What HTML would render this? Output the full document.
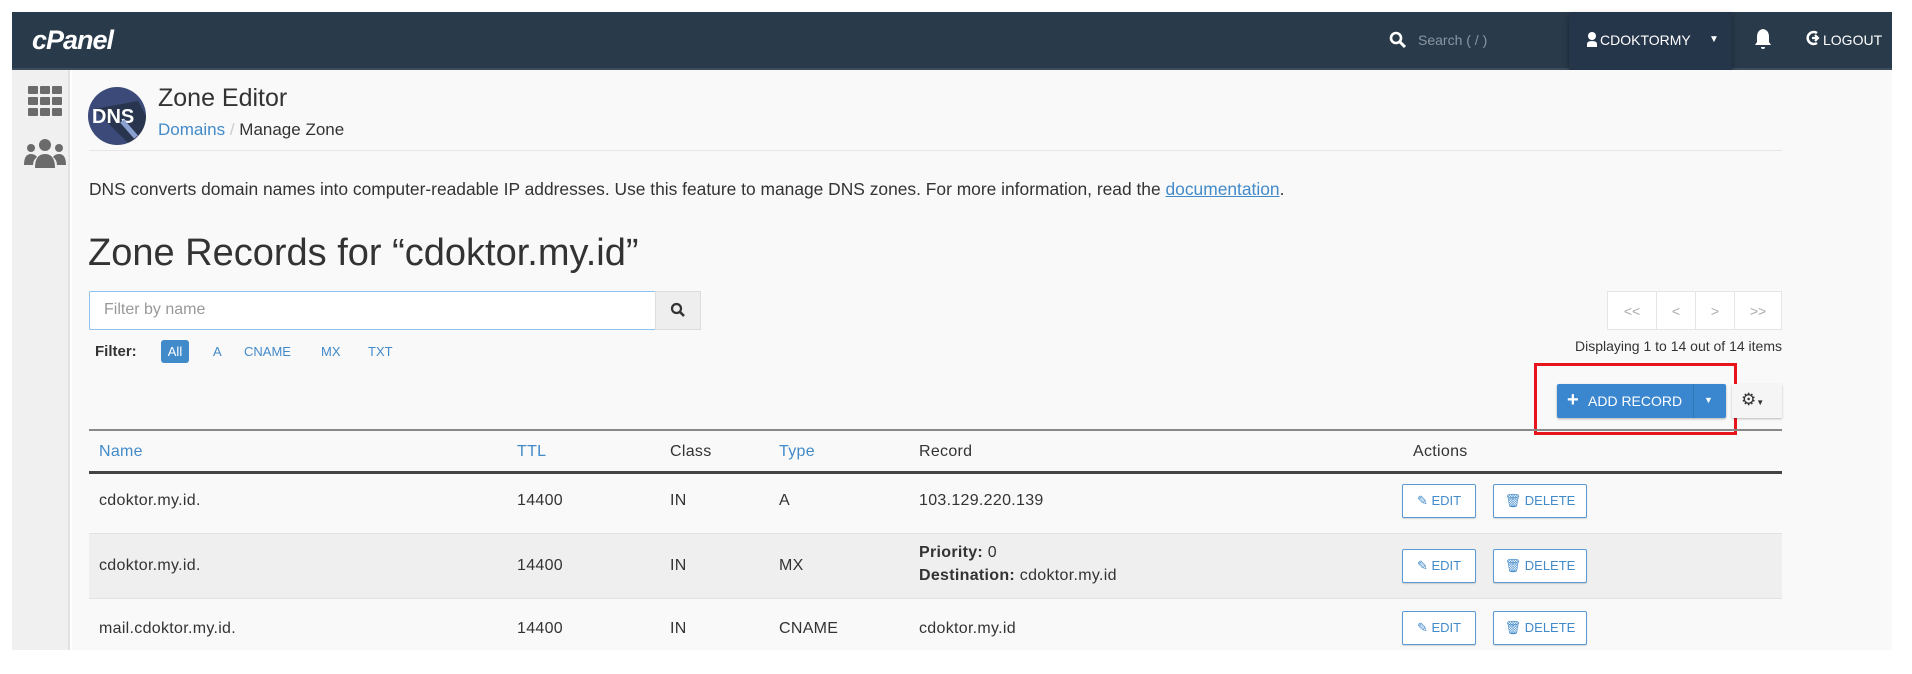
<!DOCTYPE html>
<html><head><meta charset="utf-8"><style>
*{box-sizing:border-box;margin:0;padding:0}
body{width:1912px;height:674px;background:#fff;font-family:"Liberation Sans",sans-serif;position:relative;overflow:hidden;color:#333}
.abs{position:absolute}
#nav{left:12px;top:12px;width:1880px;height:58px;background:#293a4a;border-bottom:2px solid #3d4d5c}
#side{left:12px;top:70px;width:58px;height:580px;background:#f0f0f0;border-right:2px solid #e2e2e2}
#main{left:72px;top:70px;width:1820px;height:580px;background:#f9f9f9}
.t{position:absolute;white-space:nowrap}
.r{font-size:16px;letter-spacing:.3px}
.blue{color:#428bca}
.btn{position:absolute;border:1px solid #5b9bd5;border-radius:2px;background:#fff;color:#428bca;font-size:13px;display:flex;align-items:center;justify-content:center;gap:3px;box-shadow:0 1px 1px rgba(0,0,0,.15)}
.pg{position:absolute;top:221px;height:39px;border:1px solid #e5e5e5;background:#fff;color:#aaa;font-size:14px;display:flex;align-items:center;justify-content:center}
</style></head><body>
<div id="nav" class="abs">
 <div class="t" style="left:20px;top:13px;color:#fff;font-size:27px;font-weight:bold;font-style:italic;letter-spacing:-1px">cPanel</div>
 <svg class="abs" style="left:1377px;top:19px" width="18" height="18" viewBox="0 0 18 18"><circle cx="7" cy="7" r="5" stroke="#fff" stroke-width="2.6" fill="none"/><path d="M11 11l5 5" stroke="#fff" stroke-width="3"/></svg>
 <div class="t" style="left:1406px;top:20px;color:#8a96a3;font-size:14px">Search ( / )</div>
 <div class="abs" style="left:1557px;top:0;width:163px;height:58px;background:#26364a;box-shadow:0 3px 6px rgba(0,0,0,.35)"></div>
 <svg class="abs" style="left:1574px;top:19px" width="12" height="16" viewBox="0 0 12 16"><circle cx="6" cy="5" r="4" fill="#fff"/><path d="M1 16v-3q0-3 5-3t5 3v3z" fill="#fff"/></svg>
 <div class="t" style="left:1588px;top:20px;color:#fff;font-size:14px">CDOKTORMY</div>
 <div class="t" style="left:1697px;top:22px;color:#fff;font-size:10px">▼</div>
 <svg class="abs" style="left:1742px;top:16px" width="18" height="22" viewBox="0 0 18 22"><path d="M9 1q6 1 6 8v5l2 3H1l2-3V9q0-7 6-8z M7 19h4q0 2-2 2t-2-2z" fill="#fff"/></svg>
 <svg class="abs" style="left:1794px;top:18px" width="16" height="16" viewBox="0 0 16 16"><path d="M11 3A6 6 0 1 0 11 13" stroke="#fff" stroke-width="2.5" fill="none"/><path d="M6 8h6M9 5l3 3-3 3" stroke="#fff" stroke-width="2.2" fill="none"/></svg>
 <div class="t" style="left:1811px;top:20px;color:#fff;font-size:14px">LOGOUT</div>
</div>
<div id="side" class="abs">
 <svg class="abs" style="left:16px;top:16px" width="34" height="30" viewBox="0 0 34 30"><g fill="#6b6b6b"><rect x="0" y="0" width="10" height="8" rx="1"/><rect x="12" y="0" width="10" height="8" rx="1"/><rect x="24" y="0" width="10" height="8" rx="1"/><rect x="0" y="11" width="10" height="8" rx="1"/><rect x="12" y="11" width="10" height="8" rx="1"/><rect x="24" y="11" width="10" height="8" rx="1"/><rect x="0" y="22" width="10" height="8" rx="1"/><rect x="12" y="22" width="10" height="8" rx="1"/><rect x="24" y="22" width="10" height="8" rx="1"/></g></svg>
 <svg class="abs" style="left:12px;top:68px" width="42" height="32" viewBox="0 0 42 32"><g fill="#6b6b6b"><circle cx="21" cy="7" r="6"/><circle cx="7" cy="10" r="4"/><circle cx="35" cy="10" r="4"/><path d="M11 30q0-14 10-14t10 14z"/><path d="M0 27q0-11 7-11 4 0 6 3-4 3-4 8z"/><path d="M42 27q0-11-7-11-4 0-6 3 4 3 4 8z"/></g></svg>
</div>
<div id="main" class="abs">
 <svg class="abs" style="left:16px;top:17px" width="58" height="58" viewBox="0 0 58 58"><circle cx="29" cy="29" r="29" fill="#3b4a78"/><path d="M58 29A29 29 0 0 1 40 56L6 22 50 14z" fill="#222c3c" opacity=".7"/><text x="4" y="36" font-family="Liberation Sans" font-weight="bold" font-size="20" fill="#fff">DNS</text><path d="M34 34l14 16" stroke="#8aa0d0" stroke-width="5"/></svg>
 <div class="t" style="left:86px;top:14px;font-size:25px;color:#333">Zone Editor</div>
 <div class="t" style="left:86px;top:50px;font-size:17px"><span class="blue">Domains</span> <span style="color:#ccc">/</span> Manage Zone</div>
 <div class="abs" style="left:17px;top:80px;width:1693px;height:1px;background:#e6e6e6"></div>
 <div class="t" style="left:17px;top:109px;font-size:17.4px;color:#333">DNS converts domain names into computer-readable IP addresses. Use this feature to manage DNS zones. For more information, read the <span class="blue" style="text-decoration:underline">documentation</span>.</div>
 <div class="t" style="left:16px;top:162px;font-size:38px;color:#333">Zone Records for “cdoktor.my.id”</div>
 <div class="abs" style="left:17px;top:221px;width:567px;height:39px;background:#fff;border:1px solid #8fc2ec;border-radius:2px 0 0 2px"></div>
 <div class="t" style="left:32px;top:231px;font-size:16px;color:#999">Filter by name</div>
 <div class="abs" style="left:583px;top:221px;width:46px;height:39px;background:#eee;border:1px solid #ddd"></div>
 <svg class="abs" style="left:598px;top:232px" width="16" height="16" viewBox="0 0 16 16"><circle cx="6.5" cy="6.5" r="4.5" stroke="#333" stroke-width="2.2" fill="none"/><path d="M10 10l4 4" stroke="#333" stroke-width="2.6"/></svg>
 <div class="t" style="left:23px;top:273px;font-size:15px;font-weight:bold;color:#333">Filter:</div>
 <div class="abs" style="left:89px;top:270px;width:28px;height:23px;background:#428bca;border-radius:3px;color:#fff;font-size:13px;text-align:center;line-height:23px">All</div>
 <div class="t blue" style="left:141px;top:274px;font-size:13px">A</div>
 <div class="t blue" style="left:172px;top:274px;font-size:13px">CNAME</div>
 <div class="t blue" style="left:249px;top:274px;font-size:13px">MX</div>
 <div class="t blue" style="left:296px;top:274px;font-size:13px">TXT</div>
 <div class="pg" style="left:1535px;width:50px">&lt;&lt;</div>
 <div class="pg" style="left:1584px;width:40px">&lt;</div>
 <div class="pg" style="left:1623px;width:40px">&gt;</div>
 <div class="pg" style="left:1662px;width:48px">&gt;&gt;</div>
 <div class="t" style="right:110px;top:268px;font-size:14px;color:#333">Displaying 1 to 14 out of 14 items</div>
 <div class="abs" style="left:1462px;top:293px;width:203px;height:72px;border:3px solid #e8141c"></div>
 <div class="abs" style="left:1485px;top:314px;width:169px;height:34px;background:#3a87d0;border-radius:2px;box-shadow:0 1px 2px rgba(0,0,0,.3)"></div>
 <div class="abs" style="left:1621px;top:314px;width:1px;height:34px;background:#3277b8"></div>
 <div class="t" style="left:1495px;top:319px;font-size:20px;color:#fff;font-weight:bold">+</div>
 <div class="t" style="left:1516px;top:323px;font-size:14px;color:#fff">ADD RECORD</div>
 <div class="t" style="left:1632px;top:325px;font-size:9px;color:#fff">▼</div>
 <div class="abs" style="left:1660px;top:314px;width:50px;height:34px;background:#f5f5f5;box-shadow:0 1px 2px rgba(0,0,0,.25)"></div>
 <div class="t" style="left:1669px;top:320px;font-size:17px;color:#333">⚙<span style="font-size:8px">▼</span></div>
 <div class="abs" style="left:17px;top:359px;width:1693px;height:2px;background:#888"></div>
 <div class="t blue r" style="left:27px;top:373px">Name</div>
 <div class="t blue r" style="left:445px;top:373px">TTL</div>
 <div class="t r" style="left:598px;top:373px">Class</div>
 <div class="t blue r" style="left:707px;top:373px">Type</div>
 <div class="t r" style="left:847px;top:373px">Record</div>
 <div class="t r" style="left:1341px;top:373px">Actions</div>
 <div class="abs" style="left:17px;top:401px;width:1693px;height:3px;background:#444"></div>
 <div class="abs" style="left:17px;top:463px;width:1693px;height:66px;background:#efefef;border-top:1px solid #e2e2e2;border-bottom:1px solid #e2e2e2"></div>
 <div class="t r" style="left:27px;top:422px">cdoktor.my.id.</div>
 <div class="t r" style="left:445px;top:422px">14400</div>
 <div class="t r" style="left:598px;top:422px">IN</div>
 <div class="t r" style="left:707px;top:422px">A</div>
 <div class="t r" style="left:847px;top:422px">103.129.220.139</div>
 <div class="t r" style="left:27px;top:487px">cdoktor.my.id.</div>
 <div class="t r" style="left:445px;top:487px">14400</div>
 <div class="t r" style="left:598px;top:487px">IN</div>
 <div class="t r" style="left:707px;top:487px">MX</div>
 <div class="t r" style="left:847px;top:474px"><b>Priority:</b> 0</div>
 <div class="t r" style="left:847px;top:497px"><b>Destination:</b> cdoktor.my.id</div>
 <div class="t r" style="left:27px;top:550px">mail.cdoktor.my.id.</div>
 <div class="t r" style="left:445px;top:550px">14400</div>
 <div class="t r" style="left:598px;top:550px">IN</div>
 <div class="t r" style="left:707px;top:550px">CNAME</div>
 <div class="t r" style="left:847px;top:550px">cdoktor.my.id</div>
 <div class="btn" style="left:1330px;top:414px;width:74px;height:34px">✎ EDIT</div>
 <div class="btn" style="left:1421px;top:414px;width:94px;height:34px">🗑 DELETE</div>
 <div class="btn" style="left:1330px;top:479px;width:74px;height:34px">✎ EDIT</div>
 <div class="btn" style="left:1421px;top:479px;width:94px;height:34px">🗑 DELETE</div>
 <div class="btn" style="left:1330px;top:541px;width:74px;height:34px">✎ EDIT</div>
 <div class="btn" style="left:1421px;top:541px;width:94px;height:34px">🗑 DELETE</div>
</div>
</body></html>
